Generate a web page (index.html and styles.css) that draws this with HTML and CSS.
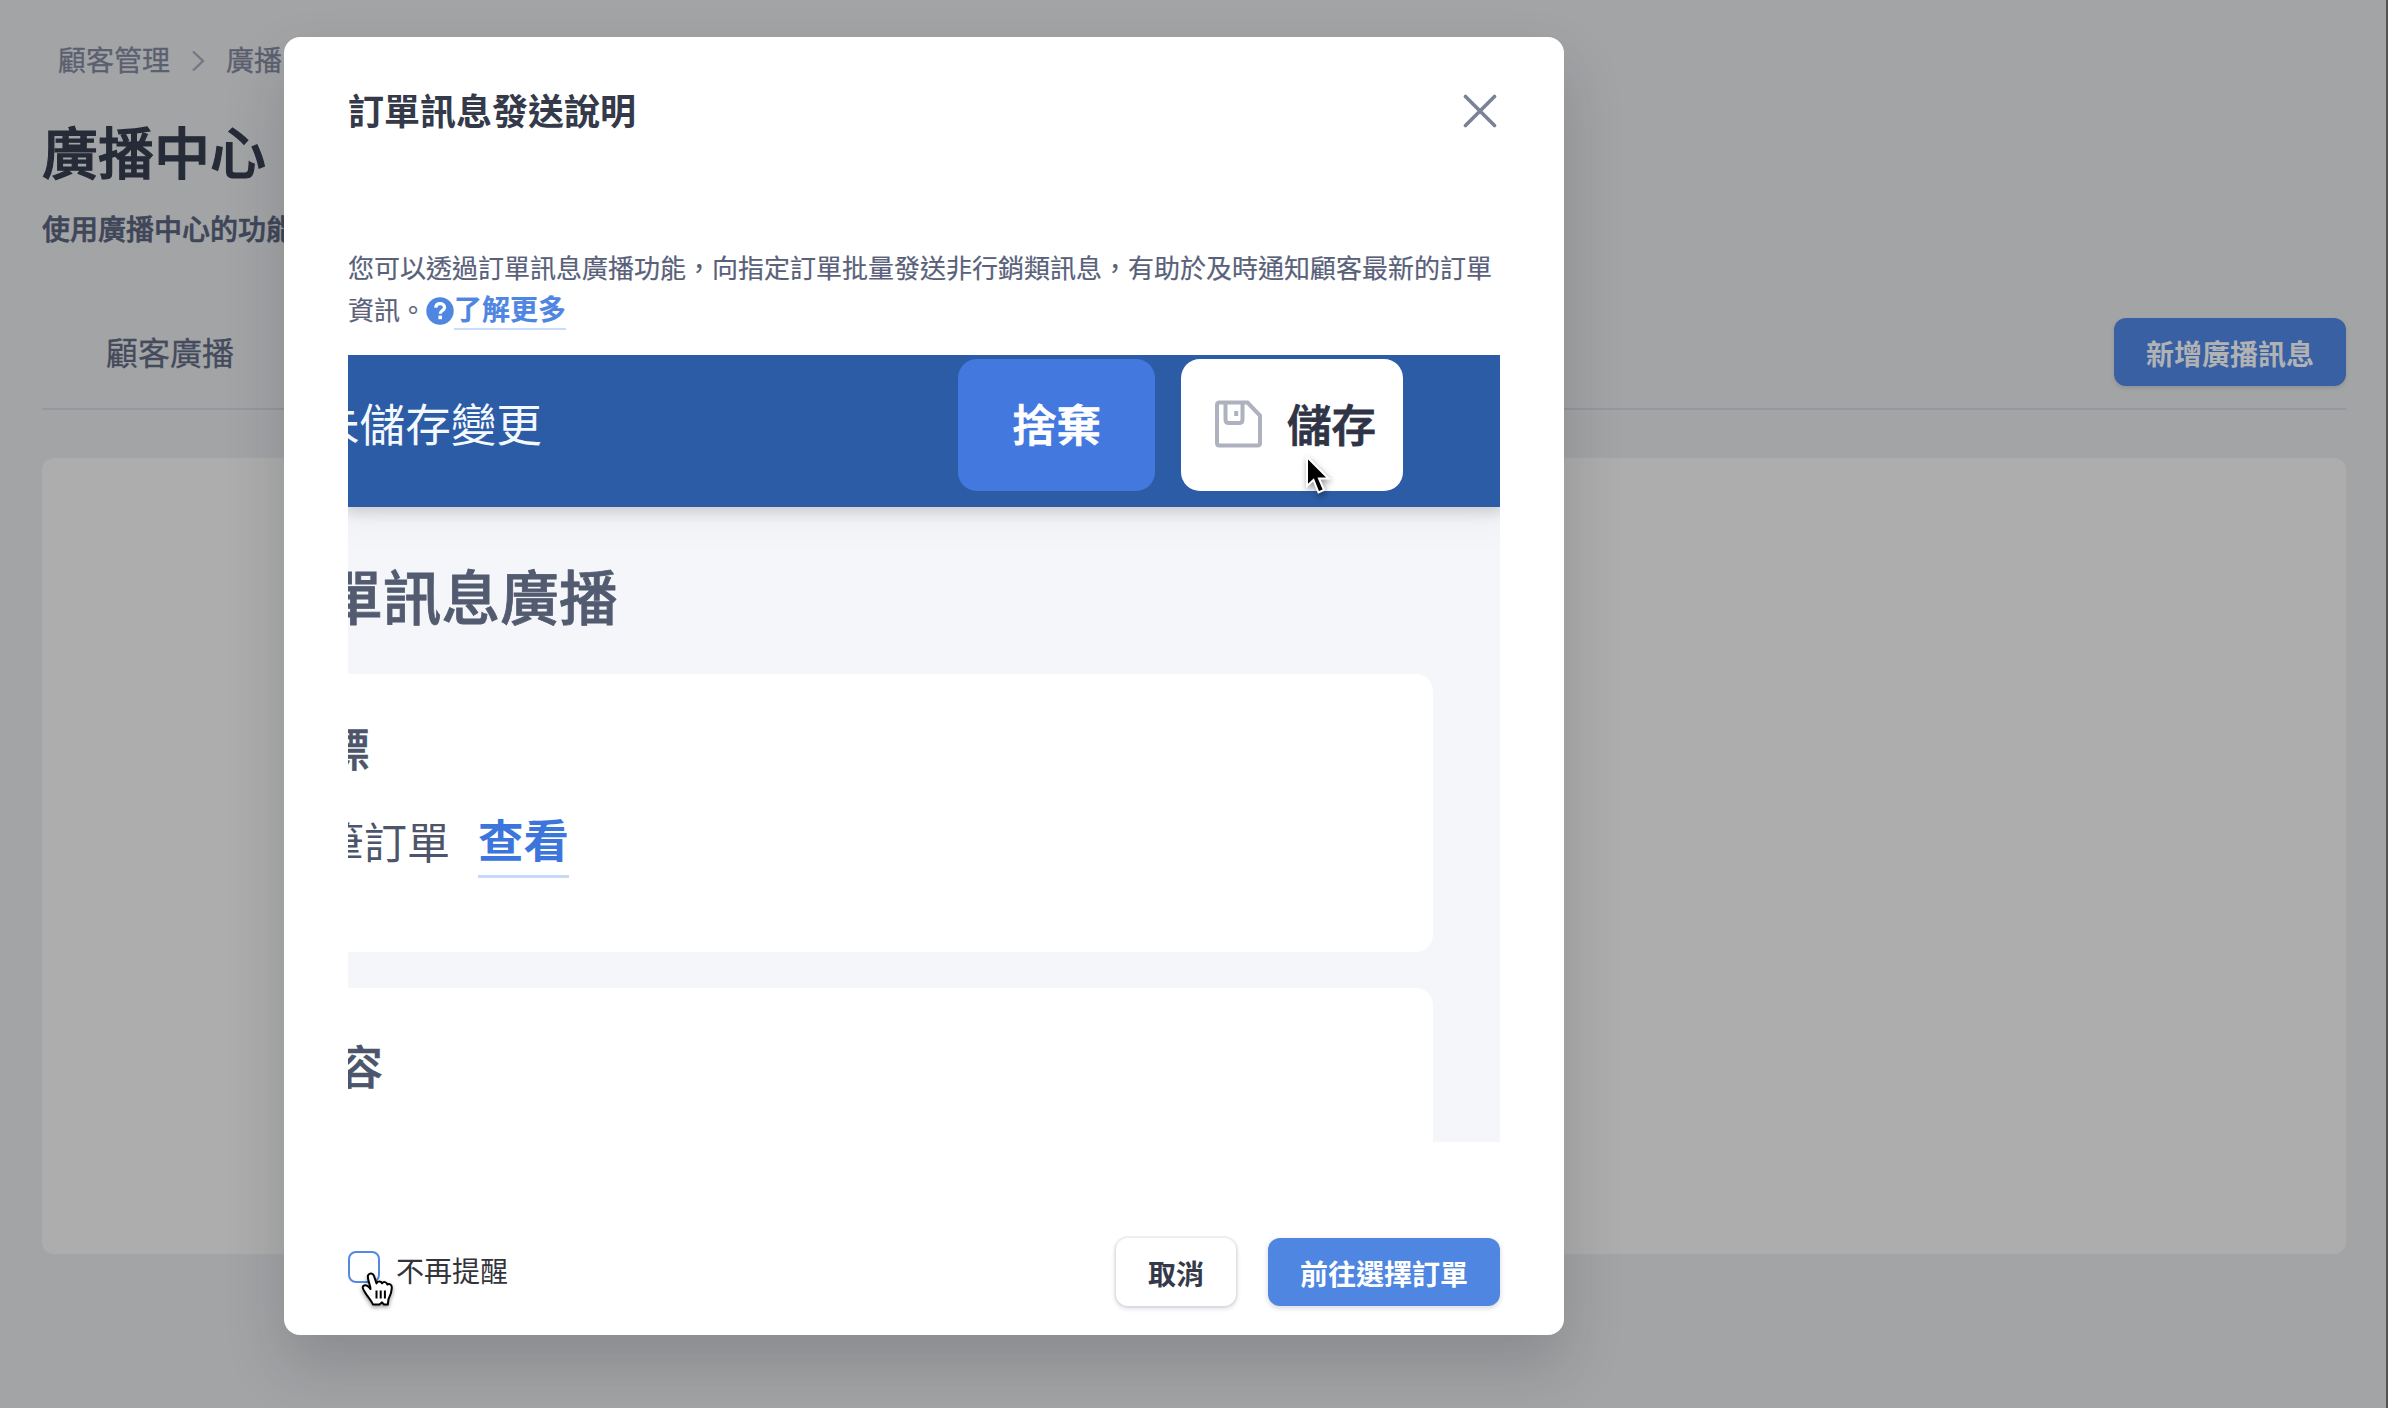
FILE: index.html
```html
<!DOCTYPE html>
<html lang="zh-Hant">
<head>
<meta charset="utf-8">
<title>廣播中心</title>
<link rel="stylesheet" href="styles.css">
</head>
<body>
<main class="page">
  <nav class="breadcrumb">
    <span>顧客管理</span>
    <svg class="breadcrumb-arrow" width="14" height="22" viewBox="0 0 14 22"><path d="M2 1.5 L12 11 L2 20.5"/></svg>
    <span>廣播中心</span>
  </nav>
  <h1 class="page-title">廣播中心</h1>
  <p class="page-intro">使用廣播中心的功能</p>
  <div class="tabs">
    <span class="tab">顧客廣播</span>
    <button class="btn btn-add">新增廣播訊息</button>
  </div>
  <section class="panel"></section>
</main>

<div class="overlay">
  <div class="dialog" role="dialog">
    <header class="dialog-header">
      <h2 class="dialog-title">訂單訊息發送說明</h2>
      <svg class="close" width="34" height="34" viewBox="0 0 34 34"><path d="M2.5 2.5 L31.5 31.5 M31.5 2.5 L2.5 31.5"/></svg>
    </header>
    <p class="dialog-text">您可以透過訂單訊息廣播功能，向指定訂單批量發送非行銷類訊息，有助於及時通知顧客最新的訂單<br>資訊。<svg class="help" width="28" height="28" viewBox="0 0 28 28"><circle cx="14" cy="14" r="13.7" fill="#4f86e2"/><path d="M9.7 10.6 C10 7.9 11.8 6.7 14.1 6.7 C16.7 6.7 18.5 8.2 18.5 10.4 C18.5 13.5 14.2 13.5 14.2 16.7" fill="none" stroke="#fff" stroke-width="3.3"/><rect x="12.4" y="18.6" width="3.6" height="3.6" fill="#fff"/></svg><a class="more">了解更多</a></p>

    <div class="demo">
      <div class="demo-bar">
        <span class="demo-status">未儲存變更</span>
        <span class="demo-btn demo-discard">捨棄</span>
        <span class="demo-btn demo-save">
          <svg width="48" height="48" viewBox="0 0 48 48"><path d="M4.5 2.5 H32.5 L45 15.5 V43 Q45 45.500 42.500 45.500 H4.500 Q2 45.500 2 43 V5 Q2 2.500 4.500 2.500 Z"/><path d="M10.500 3 V19.500 Q10.500 23 14 23 H24 Q27.500 23 27.500 19.500 V3 M21.200 11 V16"/></svg>
          <span>儲存</span>
        </span>
        <svg class="arrow-cursor" width="30" height="42" viewBox="0 0 30 42"><path d="M4 3 V32 L10.500 26 L15.500 38.500 L21 36 L16 24.500 H25.500 Z"/></svg>
      </div>
      <div class="demo-page">
        <div class="demo-title">訂單訊息廣播</div>
        <div class="demo-card demo-card-target">
          <div class="demo-heading demo-heading-target">目標</div>
          <div class="demo-row"><span class="demo-count">筆訂單</span><span class="demo-view">查看</span></div>
        </div>
        <div class="demo-card demo-card-content">
          <div class="demo-heading demo-heading-content">內容</div>
        </div>
      </div>
    </div>

    <footer class="dialog-footer">
      <label class="remind"><span class="checkbox"></span>不再提醒
        <svg class="hand-cursor" width="36" height="40" viewBox="0 0 36 40"><path d="M9 4.500 C10.500 1.500 14 2 15 5 L17.500 12.500 C18.500 10 22 10 23 12.300 C24.500 10.300 27.500 10.800 28.300 13.500 C30.500 12.300 33 13.500 32.800 17 C32.700 22 31 25 29.500 28 L28.800 33.500 H25 L23 31.300 L20.500 33.500 H14 C12.500 29.500 8.500 26 5.500 20.500 C3.800 18 3 16 4.500 14.800 C6.500 13.500 9 15 11.500 18 C11.500 14 8 8 9 4.500 Z"/><path d="M17.500 19.500 V27.500 M21.700 19.500 V27.500 M25.900 19.500 V27.500"/></svg>
      </label>
      <button class="btn btn-cancel">取消</button>
      <button class="btn btn-primary">前往選擇訂單</button>
    </footer>
  </div>
</div>
</body>
</html>
```

FILE: styles.css
```css
* { box-sizing: border-box; }

body {
  margin: 0;
  height: 1408px;
  overflow: hidden;
  background: #a3a4a6;
  font-family: "Noto Sans CJK TC", sans-serif;
}

h1, h2, p { margin: 0; }

.page {
  height: 1408px;
  padding: 39px 40px 0 42px;
  border-right: 2px solid #535353;
}

.breadcrumb {
  display: flex;
  align-items: center;
  height: 40px;
  padding-left: 16px;
  font-size: 28px;
  color: #5b6070;
  -webkit-text-stroke: .3px;
}

.breadcrumb-arrow {
  margin: 3px 21px 0;
  fill: none;
  stroke: #747885;
  stroke-width: 2.4;
}

.page-title {
  margin-top: 31px;
  font-size: 56px;
  line-height: 80px;
  font-weight: 500;
  color: #262b38;
  -webkit-text-stroke: 1.2px;
}

.page-intro {
  margin-top: 18px;
  font-size: 28px;
  line-height: 40px;
  font-weight: 500;
  color: #3f4658;
  -webkit-text-stroke: .6px;
}

.tabs {
  display: flex;
  justify-content: space-between;
  align-items: flex-start;
  height: 92px;
  margin-top: 70px;
  padding-left: 64px;
  border-bottom: 2px solid #9597a1;
}

.tab {
  font-size: 32px;
  line-height: 66px;
  color: #444b5c;
  -webkit-text-stroke: .3px;
}

.panel {
  height: 796px;
  margin-top: 48px;
  border-radius: 12px;
  background: #adadad;
}

.btn {
  height: 68px;
  padding: 0 32px;
  border: 0;
  border-radius: 12px;
  font: 700 28px/68px "Noto Sans CJK TC", sans-serif;
}

.btn-add {
  padding-top: 1px;
  background: #3860a3;
  color: #b0b2b4;
  box-shadow: 0 2px 4px rgba(0, 0, 0, .12);
}

.overlay {
  position: absolute;
  top: 37px;
  left: 284px;
}

.dialog {
  width: 1280px;
  height: 1297.5px;
  padding: 47px 64px 0;
  border-radius: 16px;
  background: #fff;
  box-shadow: 0 30px 60px rgba(20, 28, 36, .18);
}

.dialog-header {
  display: flex;
  justify-content: space-between;
  align-items: center;
  height: 50px;
}

.dialog-title {
  font-size: 36px;
  line-height: 50px;
  font-weight: 700;
  color: #353a4a;
}

.close {
  margin: 4px 3px 0 0;
  fill: none;
  stroke: #7b8296;
  stroke-width: 3.6;
  stroke-linecap: round;
}

.dialog-text {
  height: 84px;
  margin-top: 112px;
  font-size: 26px;
  line-height: 42px;
  white-space: nowrap;
  color: #59617a;
  -webkit-text-stroke: .2px;
}

.help { vertical-align: -5px; }

.more {
  border-bottom: 2px solid #cbdcf7;
  font-size: 28px;
  line-height: 1;
  font-weight: 700;
  color: #4f86e2;
}

.demo {
  width: 1152px;
  height: 787px;
  margin-top: 24.5px;
  overflow: hidden;
  background: #f4f6fa;
}

.demo-bar {
  position: relative;
  display: flex;
  height: 152px;
  padding: 4px 97px 0 0;
  background: #2b5ca5;
  box-shadow: 0 2px 12px 4px rgba(0, 0, 0, .14), 0 12px 36px 8px rgba(0, 0, 0, .03);
}

.demo-status {
  margin: 0 auto 0 -34px;
  font-size: 45.6px;
  line-height: 127px;
  color: #f4f8ff;
}

.demo-btn {
  display: flex;
  align-items: center;
  justify-content: center;
  height: 132px;
  padding-bottom: 5px;
  border-radius: 19px;
  font-size: 44.5px;
  line-height: 127px;
  font-weight: 500;
  -webkit-text-stroke: .9px;
}

.demo-discard {
  width: 197px;
  margin-right: 26px;
  background: #4379df;
  color: #fff;
}

.demo-save {
  width: 222px;
  padding-left: 7px;
  gap: 24px;
  background: #fff;
  color: #2f3446;
}

.demo-save svg {
  margin-top: 4px;
  fill: none;
  stroke: #adb2be;
  stroke-width: 4;
}

.arrow-cursor {
  position: absolute;
  left: 955px;
  top: 99px;
  fill: #000;
  stroke: #fff;
  stroke-width: 2;
  filter: drop-shadow(1px 3px 3px rgba(0, 0, 0, .4));
}

.demo-page { padding-top: 48px; }

.demo-title {
  margin-left: -82.5px;
  font-size: 58.7px;
  line-height: 80px;
  font-weight: 500;
  color: #535b70;
  -webkit-text-stroke: .8px;
}

.demo-card {
  width: 1085px;
  border-radius: 0 17px 0 0;
  background: #fff;
}

.demo-card-target {
  height: 278px;
  margin-top: 39px;
  padding-top: 42px;
  border-radius: 0 17px 17px 0;
}

.demo-heading {
  font-size: 46px;
  line-height: 60px;
  font-weight: 500;
  color: #4d556a;
  -webkit-text-stroke: .5px;
}

.demo-heading-target { margin-left: -70px; }

.demo-row {
  display: flex;
  align-items: flex-start;
  margin: 34px 0 0 -27px;
}

.demo-count {
  font-size: 43px;
  line-height: 60px;
  color: #4d556a;
}

.demo-view {
  height: 68px;
  margin-left: 28px;
  border-bottom: 3px solid #c7daf7;
  font-size: 45.5px;
  line-height: 56px;
  font-weight: 700;
  color: #3c76dc;
}

.demo-card-content {
  height: 160px;
  margin-top: 36px;
  padding-top: 46px;
}

.demo-heading-content { margin-left: -57px; }

.dialog-footer {
  display: flex;
  align-items: flex-start;
  height: 68px;
  margin-top: 96px;
}

.remind {
  position: relative;
  display: flex;
  align-items: center;
  height: 65px;
  margin-right: auto;
  font-size: 28px;
  color: #333439;
}

.checkbox {
  width: 32px;
  height: 32px;
  margin: -6px 16px 0 0;
  border: 2px solid #5389e2;
  border-radius: 8px;
}

.hand-cursor {
  position: absolute;
  left: 11px;
  top: 33px;
  fill: #fff;
  stroke: #000;
  stroke-width: 2;
  stroke-linejoin: round;
  filter: drop-shadow(0 2px 2px rgba(0, 0, 0, .4));
}

.btn-cancel {
  margin-right: 32px;
  padding-top: 1px;
  background: #fff;
  color: #353a4a;
  box-shadow: 0 0 0 2px rgba(60, 70, 100, .06), 0 2px 4px 1px rgba(60, 70, 100, .16);
}

.btn-primary {
  padding-top: 1px;
  background: #4f86e2;
  color: #fff;
  box-shadow: 0 2px 4px 1px rgba(60, 70, 100, .16);
}
```
